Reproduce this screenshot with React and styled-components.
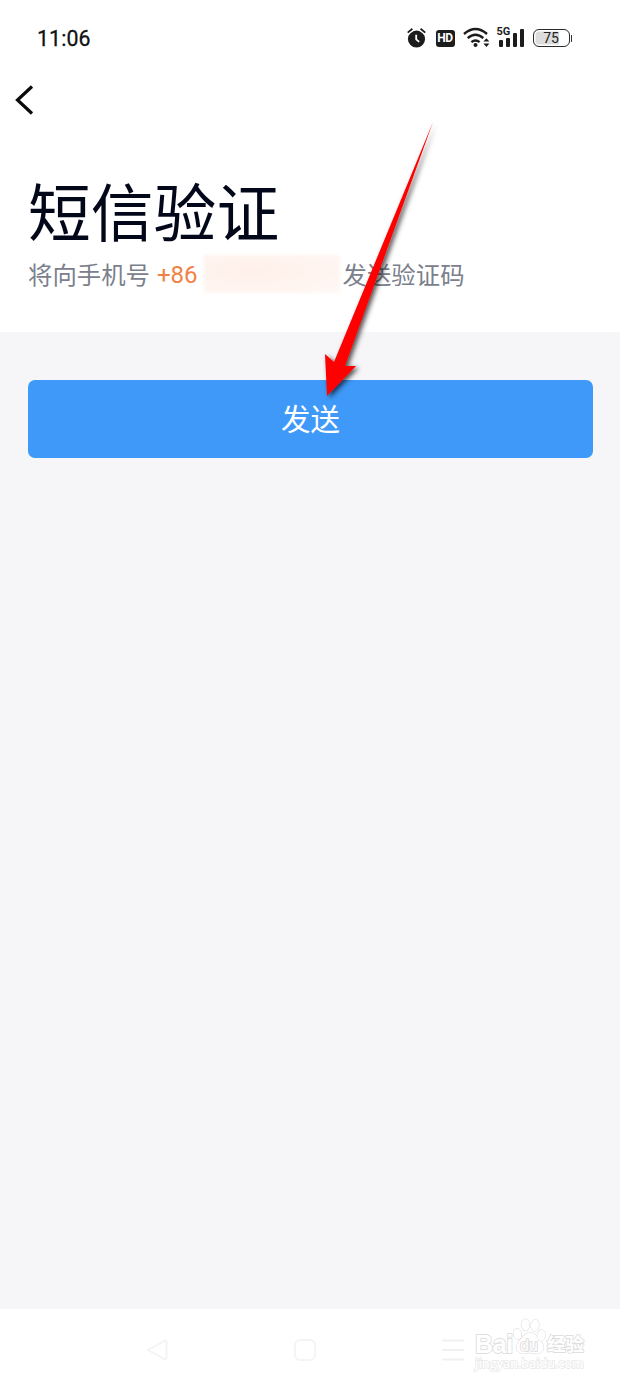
import React from "react";
import styled, { createGlobalStyle } from "styled-components";

const GlobalStyle = createGlobalStyle`
  * { box-sizing: border-box; }
  body { margin: 0; background: #fff; }
`;

const Screen = styled.div`
  position: relative;
  display: flex;
  flex-direction: column;
  width: 620px;
  height: 1386px;
  overflow: hidden;
  background: #fff;
  font-family: Roboto, "Noto Sans CJK SC", sans-serif;
`;

const StatusBar = styled.header`
  display: flex;
  align-items: center;
  justify-content: space-between;
  height: 76px;
  padding: 0 48px 0 37px;
`;

const Clock = styled.time`
  font-size: 21.3px;
  font-weight: 400;
  line-height: 26px;
  margin-top: 1px;
  letter-spacing: 0.1px;
  color: #111;
  -webkit-text-stroke: 0.3px #111;
`;

const StatusIcons = styled.div`
  display: flex;
  align-items: center;
  height: 26px;
`;

const HdBadge = styled.span`
  width: 19px;
  height: 17px;
  margin: 1px 0 0 9px;
  border-radius: 3px;
  background: #1c1c1c;
  color: #fff;
  font: 700 12px/17px Roboto, sans-serif;
  letter-spacing: -0.3px;
  text-align: center;
`;

const WifiIcon = styled.svg`
  margin-left: 8px;
`;

const Signal = styled.div`
  position: relative;
  display: flex;
  align-items: flex-end;
  gap: 3px;
  width: 29px;
  height: 20px;
  margin: 0 0 3px 7px;
  padding-left: 2px;
`;

const SignalBar = styled.i`
  width: 4px;
  height: ${(p) => p.$height}px;
  border-radius: 1px;
  background: #1c1c1c;
`;

const NetworkLabel = styled.span`
  position: absolute;
  top: 0;
  left: 0;
  font: 700 11px/10px Roboto, sans-serif;
  color: #1c1c1c;
`;

const Battery = styled.div`
  display: flex;
  align-items: center;
  margin-left: 7px;
  &::after {
    content: "";
    width: 1.5px;
    height: 7px;
    margin-left: 1px;
    background: #333;
  }
`;

const BatteryLevel = styled.span`
  width: 37px;
  height: 18px;
  border: 1.5px solid #2a2a2a;
  border-radius: 6px;
  box-shadow: inset 0 0 0 1.5px #fff;
  background: linear-gradient(90deg, #dcdcdc 72%, #fff 72%);
  color: #222;
  font: 400 14px/16px Roboto, sans-serif;
  text-align: center;
`;

const BackButton = styled.button`
  display: flex;
  align-items: center;
  width: 60px;
  height: 48px;
  padding: 0 0 0 14px;
  border: 0;
  background: none;
`;

const Intro = styled.section`
  height: 208px;
  padding: 55px 28px 0;
`;

const Title = styled.h1`
  margin: 0;
  color: #03071a;
  font-size: 62.8px;
  font-weight: 400;
  line-height: 72px;
`;

const Hint = styled.p`
  display: flex;
  align-items: center;
  height: 40px;
  margin: 5px 0 0;
  color: #7b808c;
  font-size: 24.4px;
  line-height: 40px;
  white-space: nowrap;
`;

const CountryCode = styled.span`
  margin: -2px 0 0 7px;
  color: #f18144;
  font-size: 24px;
`;

const MaskedNumber = styled.span`
  width: 136px;
  height: 38px;
  margin: -4px 3px 0 6px;
  background: radial-gradient(ellipse at 35% 42%, #fff0e9 0%, #fff5f0 65%, #fff8f5 100%);
  filter: blur(1.5px);
`;

const Content = styled.main`
  flex: 1;
  padding: 47.5px 27px 0 28px;
  background: #f6f6f9;
`;

const SendButton = styled.button`
  display: block;
  width: 100%;
  height: 78.5px;
  padding: 0 0 3px;
  border: 0;
  border-radius: 7px;
  background: #3f99f8;
  color: #fff;
  font-family: "Noto Sans CJK SC", sans-serif;
  font-size: 29.5px;
  line-height: 75px;
`;

const NavBar = styled.nav`
  display: flex;
  align-items: center;
  gap: 126px;
  height: 77px;
  padding: 4px 0 0 146px;
`;

const PointerArrow = styled.svg`
  position: absolute;
  top: 110px;
  left: 310px;
  pointer-events: none;
`;

const Watermark = styled.div`
  position: absolute;
  top: 1316px;
  left: 475px;
  width: 112px;
  color: #fff;
  -webkit-text-stroke: 1.8px #dfdfdf;
  paint-order: stroke fill;
`;

const Brand = styled.div`
  display: flex;
  align-items: flex-end;
  height: 40px;
  font: 700 25px/24px "Liberation Sans", sans-serif;
`;

const BrandLatin = styled.span`
  width: 38px;
  height: 24px;
  letter-spacing: -0.3px;
`;

const BrandChinese = styled.span`
  height: 25px;
  font: 700 18.5px/24px "Noto Sans CJK SC", sans-serif;
`;

const SiteAddress = styled.div`
  font: 600 12.4px/16px "Open Sans", sans-serif;
  letter-spacing: -0.05px;
  -webkit-text-stroke: 1.4px #e7e7e7;
`;

const AlarmIcon = () => (
  <svg width="20" height="22" viewBox="0 0 20 22">
    <circle cx="9.5" cy="12" r="8.6" fill="#1c1c1c" />
    <path d="M.7 6 5.4 2M18.3 6l-4.7-4" stroke="#fff" strokeWidth="4" />
    <path d="M.7 5.6 5.4 1.8M18.3 5.6l-4.7-3.8" stroke="#1c1c1c" strokeWidth="1.8" />
    <path d="M9.2 7.8v4.6l3 2.5" fill="none" stroke="#fff" strokeWidth="1.8" />
  </svg>
);

const Wifi = () => (
  <WifiIcon width="27" height="22" viewBox="0 0 27 22">
    <g fill="none" stroke="#1c1c1c" strokeWidth="2.4">
      <path d="M1 7Q12.5-3 24 7M4.7 11.1q7.8-6.8 15.6 0M8.4 15.2q4.1-3.5 8.2 0" />
    </g>
    <circle cx="12.5" cy="18.1" r="2" fill="#1c1c1c" />
    <path d="m20.4 14.6 3-3.4 3 3.4zM20.4 16.5h6l-3 3.4z" fill="#1c1c1c" />
  </WifiIcon>
);

const PawLetters = styled.text`
  font: 400 16px "Liberation Sans", sans-serif;
  fill: #fff;
  stroke: #d8d8d8;
  stroke-width: 1.6px;
  -webkit-text-stroke: 0;
  paint-order: stroke;
`;

const Paw = () => (
  <svg width="34" height="40" viewBox="0 0 34 40" overflow="visible">
    <g fill="#fff" stroke="#dedede" strokeWidth="1.1">
      <path d="M10 20.5q7-8 14 0l5 6q4 7-2 10.5-5 1.5-10-.5-5 2-10 .5-6-3.5-2-10.5z" />
      <ellipse cx="4.5" cy="18" rx="4" ry="5.4" transform="rotate(-8 4.5 18)" />
      <ellipse cx="12.5" cy="8.8" rx="4" ry="5.7" />
      <ellipse cx="22" cy="9.5" rx="4" ry="5.7" transform="rotate(8 22 9.5)" />
      <ellipse cx="28.3" cy="19.3" rx="4" ry="5.4" transform="rotate(8 28.3 19.3)" />
    </g>
    <PawLetters x="16" y="35" textAnchor="middle">du</PawLetters>
  </svg>
);

export default function App() {
  return (
    <Screen>
      <GlobalStyle />
      <StatusBar>
        <Clock>11:06</Clock>
        <StatusIcons>
          <AlarmIcon />
          <HdBadge>HD</HdBadge>
          <Wifi />
          <Signal>
            <NetworkLabel>5G</NetworkLabel>
            {[7, 9, 14, 18].map((height, i) => <SignalBar key={i} $height={height} />)}
          </Signal>
          <Battery><BatteryLevel>75</BatteryLevel></Battery>
        </StatusIcons>
      </StatusBar>
      <BackButton aria-label="返回">
        <svg width="22" height="32" viewBox="0 0 22 32">
          <path d="M18 2.5 3.5 16 18 29.5" fill="none" stroke="#0b0b0b" strokeWidth="3.2" />
        </svg>
      </BackButton>
      <Intro>
        <Title>短信验证</Title>
        <Hint>
          将向手机号<CountryCode>+86</CountryCode><MaskedNumber />发送验证码
        </Hint>
      </Intro>
      <Content><SendButton>发送</SendButton></Content>
      <NavBar>
        <svg width="22" height="22" viewBox="0 0 22 22" fill="none" stroke="#f4f4f4" strokeWidth="2">
          <path d="M2 11 18.5 1.8Q20.5 1 20.5 3v16q0 2-2 1.2z" />
        </svg>
        <svg width="22" height="22" viewBox="0 0 22 22" fill="none" stroke="#f4f4f4" strokeWidth="2">
          <rect x="1" y="1" width="20" height="20" rx="5" />
        </svg>
        <svg width="22" height="22" viewBox="0 0 22 22" stroke="#f1f1f1" strokeWidth="2">
          <path d="M0 1.5h22M0 11h22M0 20.5h22" />
        </svg>
      </NavBar>
      <Watermark>
        <Brand>
          <BrandLatin>Bai</BrandLatin><Paw /><BrandChinese>经验</BrandChinese>
        </Brand>
        <SiteAddress>jingyan.baidu.com</SiteAddress>
      </Watermark>
      <PointerArrow width="140" height="310" viewBox="310 110 140 310">
        <defs>
          <filter id="arrowShadow" x="-20%" y="-10%" width="150%" height="120%">
            <feDropShadow dx="2.5" dy="2" stdDeviation="2.5" floodColor="#000" floodOpacity="0.7" />
          </filter>
        </defs>
        <path d="M433 122 345 366l11 0-29 30-2-42 9 8z" fill="#fe0000" filter="url(#arrowShadow)" />
      </PointerArrow>
    </Screen>
  );
}
